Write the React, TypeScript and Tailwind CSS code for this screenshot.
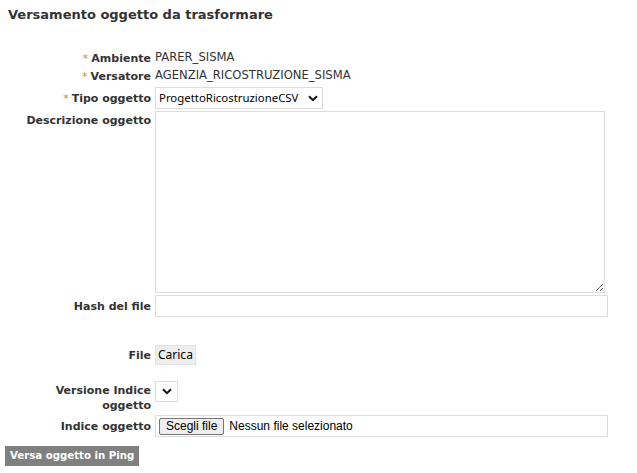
const labelFont = { fontFamily: '"DejaVu Sans", Verdana, sans-serif' }

function Label({ text, required }: { text: React.ReactNode; required?: boolean }) {
  return (
    <div className="w-[151px] shrink-0 text-right text-[11px] font-bold leading-[15px] text-[#333]">
      {required && <span className="text-[#d9892e] font-normal mr-[3px]">*</span>}
      {text}
    </div>
  )
}

function Chevron() {
  return (
    <svg width="10" height="7" viewBox="0 0 10 7" className="shrink-0">
      <path d="M1 1.2 L5 5.2 L9 1.2" fill="none" stroke="#111" strokeWidth="2" />
    </svg>
  )
}

export default function App() {
  return (
    <div className="w-[637px] h-[473px] bg-white text-[#333] overflow-hidden" style={labelFont}>
      <h1 className="pl-[8px] pt-[6px] text-[13px] font-bold leading-[17px] text-[#333]">
        Versamento oggetto da trasformare
      </h1>

      <div className="mt-[26px] flex flex-col">
        <div className="flex items-center h-[18px] gap-[4px]">
          <Label text="Ambiente" required />
          <span className="text-[11.6px]">PARER_SISMA</span>
        </div>
        <div className="flex items-center h-[18px] gap-[4px]">
          <Label text="Versatore" required />
          <span className="text-[11.6px]">AGENZIA_RICOSTRUZIONE_SISMA</span>
        </div>

        <div className="flex items-center mt-[2px] h-[22px] gap-[4px]">
          <Label text="Tipo oggetto" required />
          <div className="w-[168px] h-[22px] border border-[#ddd] flex items-center justify-between pl-[3px] pr-[4px]">
            <span className="text-[11.4px] text-black" style={{ fontFamily: '"Noto Sans", sans-serif' }}>
              ProgettoRicostruzioneCSV
            </span>
            <Chevron />
          </div>
        </div>

        <div className="flex items-start mt-[2px] gap-[4px]">
          <div className="pt-[2px]">
            <Label text="Descrizione oggetto" />
          </div>
          <textarea className="w-[450px] h-[182px] border border-[#ddd] outline-none" />
        </div>

        <div className="flex items-center mt-[2px] h-[22px] gap-[4px]">
          <Label text="Hash del file" />
          <div className="w-[453px] h-[22px] border border-[#ddd]" />
        </div>

        <div className="flex items-center mt-[28px] h-[20px] gap-[4px]">
          <Label text="File" />
          <div
            className="h-[20px] px-[2px] bg-[#eee] border border-[#e2e2e2] flex items-center text-[12px] text-black"
            style={{ fontFamily: '"Noto Sans", sans-serif' }}
          >
            Carica
          </div>
        </div>

        <div className="flex items-start mt-[16px] gap-[4px]">
          <div className="pt-[2px]">
            <Label
              text={
                <>
                  Versione Indice
                  <br />
                  oggetto
                </>
              }
            />
          </div>
          <div className="w-[23px] h-[21px] border border-[#ddd] flex items-center justify-center">
            <Chevron />
          </div>
        </div>

        <div className="flex items-center mt-[2px] h-[22px] gap-[4px]">
          <Label text="Indice oggetto" />
          <div
            className="w-[453px] h-[22px] border border-[#ddd] flex items-center pl-[3px] gap-[5px] text-[12px] text-black"
            style={{ fontFamily: '"Liberation Sans", Arial, sans-serif' }}
          >
            <div className="h-[17px] px-[6px] bg-[#efefef] border border-[#767676] rounded-[2px] flex items-center text-[12px]">
              Scegli file
            </div>
            <span>Nessun file selezionato</span>
          </div>
        </div>

        <div className="mt-[9px] pl-[5px] flex">
          <div className="flex items-center h-[20px] px-[5px] bg-[#808080] text-white text-[10.2px] font-bold">
            Versa oggetto in Ping
          </div>
        </div>
      </div>
    </div>
  )
}
